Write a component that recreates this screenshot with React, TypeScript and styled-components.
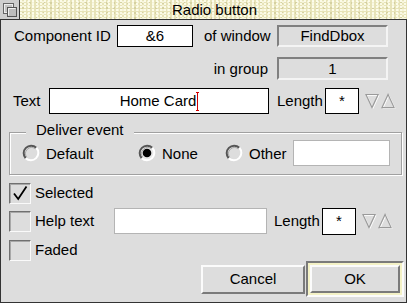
import React from 'react';
import styled, { createGlobalStyle } from 'styled-components';

const Global = createGlobalStyle`
  html, body { margin: 0; padding: 0; background: #dddddd; }
  body { font-family: "Liberation Sans", Arial, sans-serif; font-size: 15px; color: #000; }
  * { box-sizing: border-box; }
`;

const Window = styled.div`
  width: 407px;
  height: 303px;
  display: flex;
  flex-direction: column;
  background: #dddddd;
`;

const TitleBar = styled.div`
  height: 20px;
  display: flex;
  border-bottom: 1px solid #333;
  background-color: #e7e3b8;
  background-image:
    radial-gradient(circle at 1px 1px, rgba(255,255,240,0.85) 0.9px, transparent 1.1px),
    radial-gradient(circle at 3px 2px, rgba(250,248,225,0.8) 0.9px, transparent 1.1px),
    radial-gradient(circle at 2px 3px, rgba(205,200,150,0.7) 0.8px, transparent 1px);
  background-size: 4px 3px, 5px 4px, 7px 5px;
`;

const BackIcon = styled.div`
  width: 20px;
  height: 19px;
  background: #cfcfcf;
  border-right: 1px solid #333;
  display: flex;
  align-items: center;
  justify-content: center;
`;

const Title = styled.div`
  flex: 1;
  text-align: center;
  line-height: 19px;
  padding-left: 2px;
`;

const Body = styled.div`
  flex: 1;
  display: flex;
  flex-direction: column;
  border: 1px solid #333;
  border-top: none;
`;

const Row = styled.div<{ $mt: number; $h: number; $pl?: number; $pr?: number; $end?: boolean }>`
  display: flex;
  align-items: center;
  margin-top: ${p => p.$mt}px;
  height: ${p => p.$h}px;
  padding-left: ${p => p.$pl ?? 0}px;
  padding-right: ${p => p.$pr ?? 0}px;
  justify-content: ${p => (p.$end ? 'flex-end' : 'flex-start')};
`;

const Label = styled.div<{ $w?: number; $pl?: number; $pr?: number; $right?: boolean }>`
  width: ${p => (p.$w ? `${p.$w}px` : 'auto')};
  flex-shrink: 0;
  padding-left: ${p => p.$pl ?? 0}px;
  padding-right: ${p => p.$pr ?? 0}px;
  text-align: ${p => (p.$right ? 'right' : 'left')};
  white-space: nowrap;
  line-height: 18px;
`;

const Field = styled.div<{ $w: number; $h: number; $faded?: boolean }>`
  width: ${p => p.$w}px;
  height: ${p => p.$h}px;
  flex-shrink: 0;
  background: #fff;
  border: 1px solid ${p => (p.$faded ? '#b4b4b4' : '#000')};
  display: flex;
  align-items: center;
  justify-content: center;
  white-space: nowrap;
  line-height: 18px;
`;

const Display = styled.div<{ $h: number }>`
  width: 111px;
  height: ${p => p.$h}px;
  flex-shrink: 0;
  border: 2px solid;
  border-color: #808080 #f4f4f4 #f4f4f4 #808080;
  display: flex;
  align-items: center;
  justify-content: center;
  line-height: 18px;
`;

const Caret = styled.span`
  position: relative;
  display: inline-block;
  width: 1px;
  height: 19px;
  background: #d00000;
  margin-left: 1px;
  vertical-align: middle;
  &::before, &::after {
    content: '';
    position: absolute;
    left: -1px;
    width: 3px;
    height: 1px;
    background: #d00000;
  }
  &::before { top: 0; }
  &::after { bottom: 0; }
`;

const Arrows = styled.div<{ $ml: number }>`
  display: flex;
  margin-left: ${p => p.$ml}px;
  gap: 1px;
`;

const Group = styled.div`
  position: relative;
  margin: 18px 4px 0 8px;
  height: 43px;
  border: 1px solid #a0a0a0;
  box-shadow: inset 1px 1px 0 #fff, 1px 1px 0 #fff;
  display: flex;
  align-items: flex-start;
  padding: 7px 0 0 12px;
`;

const GroupLabel = styled.div`
  position: absolute;
  left: 16px;
  top: -12px;
  padding: 0 10px;
  background: #dddddd;
  line-height: 18px;
`;

const RadioItem = styled.div<{ $w: number }>`
  width: ${p => p.$w}px;
  height: 26px;
  flex-shrink: 0;
  display: flex;
  align-items: center;
  gap: 6px;
`;

const Check = styled.div`
  width: 22px;
  height: 21px;
  flex-shrink: 0;
  border: 1px solid;
  border-color: #707070 #fafafa #fafafa #707070;
  box-shadow: inset 1px 1px 0 #a8a8a8;
  display: flex;
  align-items: center;
  justify-content: center;
  margin-right: 4px;
`;

const Button = styled.div<{ $w: number; $h: number }>`
  width: ${p => p.$w}px;
  height: ${p => p.$h}px;
  flex-shrink: 0;
  border: 2px solid;
  border-color: #fbfbfb #7a7a7a #7a7a7a #fbfbfb;
  background: #dddddd;
  display: flex;
  align-items: center;
  justify-content: center;
  line-height: 18px;
`;

const DefaultFrame = styled.div`
  width: 98px;
  height: 36px;
  flex-shrink: 0;
  margin-left: 1px;
  border: 2px solid;
  border-color: #7a7a7a #fbfbfb #fbfbfb #7a7a7a;
  background: #f4f2c6;
  padding: 2px;
  display: flex;
`;

const Radio: React.FC<{ on?: boolean }> = ({ on }) => (
  <svg width="18" height="18" viewBox="0 0 18 18">
    <circle cx="9" cy="9" r="7.5" fill={on ? '#e8e8e8' : '#dddddd'} />
    <path d="M3.7 14.3 A7.5 7.5 0 0 1 14.3 3.7" fill="none" stroke="#555" strokeWidth="2" />
    <path d="M14.3 3.7 A7.5 7.5 0 0 1 3.7 14.3" fill="none" stroke="#fff" strokeWidth="2" />
    <path d="M4.8 13.2 A6 6 0 0 1 13.2 4.8" fill="none" stroke="#aaa" strokeWidth="1" />
    {on && <circle cx="9" cy="9" r="4.3" fill="#000" />}
  </svg>
);

const Tri: React.FC<{ up?: boolean }> = ({ up }) => {
  const pts = up ? '7.5,3 1,17 14,17' : '1,3 14,3 7.5,17';
  const pts2 = up ? '8.5,4 2,18 15,18' : '2,4 15,4 8.5,18';
  return (
    <svg width="15" height="20" viewBox="0 0 16 20">
      <polygon points={pts2} fill="none" stroke="#fff" strokeWidth="1" />
      <polygon points={pts} fill="none" stroke="#9a9a9a" strokeWidth="1.2" />
    </svg>
  );
};

const SpinArrows: React.FC<{ ml: number }> = ({ ml }) => (
  <Arrows $ml={ml}>
    <Tri />
    <Tri up />
  </Arrows>
);

export default function App() {
  return (
    <>
      <Global />
      <Window>
        <TitleBar>
          <BackIcon>
            <svg width="16" height="16" viewBox="0 0 16 16">
              <rect x="1.5" y="1.5" width="10" height="10" fill="#c4c4c4" stroke="#666" />
              <rect x="2.5" y="2.5" width="8" height="8" fill="none" stroke="#eee" />
              <rect x="5.5" y="5.5" width="9" height="9" fill="#bdbdbd" stroke="#555" />
              <path d="M6.5 13.5 V6.5 H13.5" fill="none" stroke="#f2f2f2" />
            </svg>
          </BackIcon>
          <Title>Radio button</Title>
        </TitleBar>
        <Body>
          <Row $mt={5} $h={22} $pl={13}>
            <Label $w={103}>Component ID</Label>
            <Field $w={76} $h={22}>&amp;6</Field>
            <Label $w={84} $pl={11}>of window</Label>
            <Display $h={22}>FindDbox</Display>
          </Row>
          <Row $mt={10} $h={23} $pl={13}>
            <Label $w={263} $pr={9} $right>in group</Label>
            <Display $h={23}>1</Display>
          </Row>
          <Row $mt={8} $h={26} $pl={12}>
            <Label $w={36}>Text</Label>
            <Field $w={220} $h={26}>
              Home Card<Caret />
            </Field>
            <Label $w={56} $pl={8}>Length</Label>
            <Field $w={34} $h={26}>*</Field>
            <SpinArrows ml={6} />
          </Row>
          <Group>
            <GroupLabel>Deliver event</GroupLabel>
            <RadioItem $w={116}>
              <Radio />
              Default
            </RadioItem>
            <RadioItem $w={87}>
              <Radio on />
              None
            </RadioItem>
            <RadioItem $w={68}>
              <Radio />
              Other
            </RadioItem>
            <Field $w={97} $h={26} $faded />
          </Group>
          <Row $mt={7} $h={22} $pl={8}>
            <Check>
              <svg width="18" height="18" viewBox="0 0 18 18">
                <path d="M3 9.5 L7.2 15 L15.5 2.5" fill="none" stroke="#000" strokeWidth="1.8" />
              </svg>
            </Check>
            <Label>Selected</Label>
          </Row>
          <Row $mt={3} $h={28} $pl={8}>
            <Check />
            <Label $w={79}>Help text</Label>
            <Field $w={153} $h={26} $faded />
            <Label $w={55} $pl={7}>Length</Label>
            <Field $w={34} $h={27}>*</Field>
            <SpinArrows ml={6} />
          </Row>
          <Row $mt={5} $h={20} $pl={8}>
            <Check />
            <Label>Faded</Label>
          </Row>
          <Row $mt={1} $h={36} $pr={2} $end>
            <Button $w={104} $h={29}>Cancel</Button>
            <DefaultFrame>
              <Button $w={90} $h={28}>OK</Button>
            </DefaultFrame>
          </Row>
        </Body>
      </Window>
    </>
  );
}
